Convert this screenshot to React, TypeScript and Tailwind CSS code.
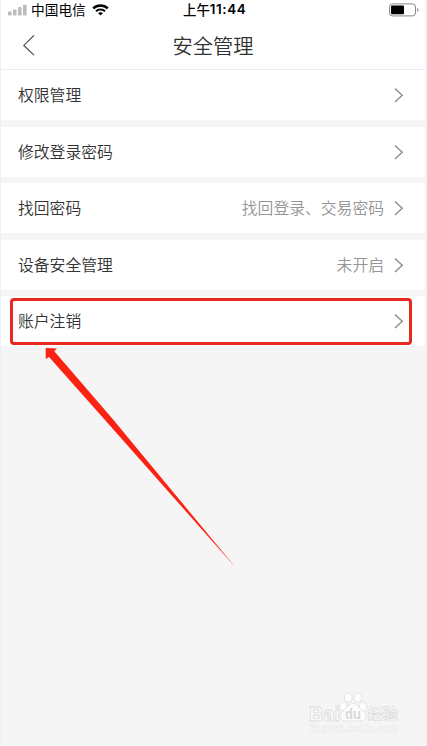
type MenuItem = {
  label: string
  value?: string
}

const items: MenuItem[] = [
  { label: '权限管理' },
  { label: '修改登录密码' },
  { label: '找回密码', value: '找回登录、交易密码' },
  { label: '设备安全管理', value: '未开启' },
  { label: '账户注销' },
]

function StatusBar() {
  return (
    <div className="relative flex h-5 items-center justify-between pl-[7px] pr-[6px] text-black">
      <div className="flex items-center">
        <svg className="-mt-px" width="19" height="12" viewBox="0 0 19 12" fill="#bcbcbc">
          <rect x="0" y="7.5" width="3.6" height="4" rx="0.8" />
          <rect x="5" y="5.5" width="3.6" height="6" rx="0.8" />
          <rect x="10" y="3" width="3.6" height="8.5" rx="0.8" />
          <rect x="15" y="0.8" width="3.6" height="10.7" rx="0.8" />
        </svg>
        <span className="-mt-[2px] ml-[4px] text-[13.7px] leading-5">中国电信</span>
        <svg className="-mt-px ml-[6px]" width="17" height="12" viewBox="0 0 17 12" fill="none" stroke="#000">
          <path d="M1.2 4.3C5.3 0.5 11.7 0.5 15.8 4.3" strokeWidth="2.4" />
          <path d="M4 7.2C6.5 4.9 10.5 4.9 13 7.2" strokeWidth="2" />
          <path d="M8.5 11.6L6 9.1C7.4 7.9 9.6 7.9 11 9.1Z" fill="#000" stroke="none" />
        </svg>
      </div>
      <div className="absolute -top-px left-[182px] flex text-[13.4px] font-medium leading-5">
        <span>上午</span>
        <span className="font-['Inter','Noto_Sans_CJK_SC',sans-serif] font-semibold tracking-[0.6px]">11:44</span>
      </div>
      <svg className="-mt-px" width="30" height="14" viewBox="0 0 30 14">
        <rect x="0.5" y="0.9" width="26" height="12" rx="3" fill="none" stroke="#8a8a8a" />
        <rect x="2" y="2.5" width="13" height="8.8" rx="1" fill="#000" />
        <path d="M28.2 4.8C30 5.6 30 8.2 28.2 9Z" fill="#8a8a8a" />
      </svg>
    </div>
  )
}

function Header() {
  return (
    <header className="flex h-[50px] items-center border-b border-[#e8edf4] pl-[21px]">
      <svg width="14" height="22" viewBox="0 0 14 22" fill="none" stroke="#444" strokeWidth="1.1">
        <path d="M12 1.4L1.8 11.4L12 21.2" />
      </svg>
      <h1 className="ml-[136.5px] text-[20.3px] font-[350] leading-[50px] text-[#333]">安全管理</h1>
    </header>
  )
}

function MenuRow({ label, value }: MenuItem) {
  return (
    <div className="flex h-[50px] items-center bg-white pl-[17px] pr-[21px] text-[15.8px] font-[350] text-[#333]">
      <span>{label}</span>
      <span className="ml-auto mr-[10px] text-[#959595]">{value}</span>
      <svg width="10" height="16" viewBox="0 0 10 16" fill="none" stroke="#8c8c8c" strokeWidth="1.4">
        <path d="M1 1.5L8.2 8.2L1 14.9" />
      </svg>
    </div>
  )
}

function Watermark() {
  return (
    <svg
      className="absolute left-[307px] top-[690px]"
      width="96"
      height="46"
      viewBox="0 0 96 46"
      fill="#fdfdfd"
      stroke="#dcdcdc"
      strokeWidth="0.8"
    >
      <g className="font-['Liberation_Sans',sans-serif] font-bold">
        <text x="1" y="30.5" fontSize="21" textLength="31" lengthAdjust="spacingAndGlyphs">Bai</text>
        <text x="2" y="41.5" fontSize="10" strokeWidth="0.3" stroke="#e4e4e4" fill="#f9f9f9" textLength="88" lengthAdjust="spacingAndGlyphs">
          jingyan.baidu.com
        </text>
      </g>
      <ellipse cx="35.5" cy="16.5" rx="3.7" ry="4.5" />
      <ellipse cx="40.3" cy="7.6" rx="3.9" ry="4.8" />
      <ellipse cx="49.7" cy="7.6" rx="3.9" ry="4.8" />
      <ellipse cx="55" cy="16.5" rx="3.7" ry="4.5" />
      <path d="M45 13.5C49 13.5 50.5 17.5 54 20C60 24 59 31 52 31H38C31 31 30 24 36 20C39.5 17.5 41 13.5 45 13.5Z" />
      <text x="37" y="28.5" fontSize="14" className="font-['Liberation_Sans',sans-serif] font-bold" fill="#d8d8d8" stroke="none" textLength="16" lengthAdjust="spacingAndGlyphs">du</text>
      <text x="59.5" y="29" fontSize="15.2" strokeWidth="0.7" className="font-['Noto_Sans_CJK_SC',sans-serif] font-bold">经验</text>
    </svg>
  )
}

export default function App() {
  return (
    <div className="relative h-[746px] w-[427px] overflow-hidden border-l border-r-2 border-l-[#e9f1f9] border-r-[#eff2f7] bg-[#f5f5f5] font-['Noto_Sans_CJK_SC',sans-serif]">
      <div className="bg-white">
        <StatusBar />
        <Header />
      </div>
      <main className="flex flex-col gap-[6.5px]">
        {items.map((item) => (
          <MenuRow key={item.label} {...item} />
        ))}
      </main>

      {/* highlight on the account removal row */}
      <div className="absolute left-[9px] top-[298px] h-[47px] w-[402px] rounded-[4px] border-[3px] border-[#e8291f]" />
      <svg className="absolute left-[43px] top-[346px]" width="194" height="224" viewBox="0 0 194 224" fill="#fb2212">
        <path d="M1.7 2L13 2.5L10.3 5.2L69.5 74L192 222L61 74L5 11L1.7 13Z" />
      </svg>

      <Watermark />
    </div>
  )
}
